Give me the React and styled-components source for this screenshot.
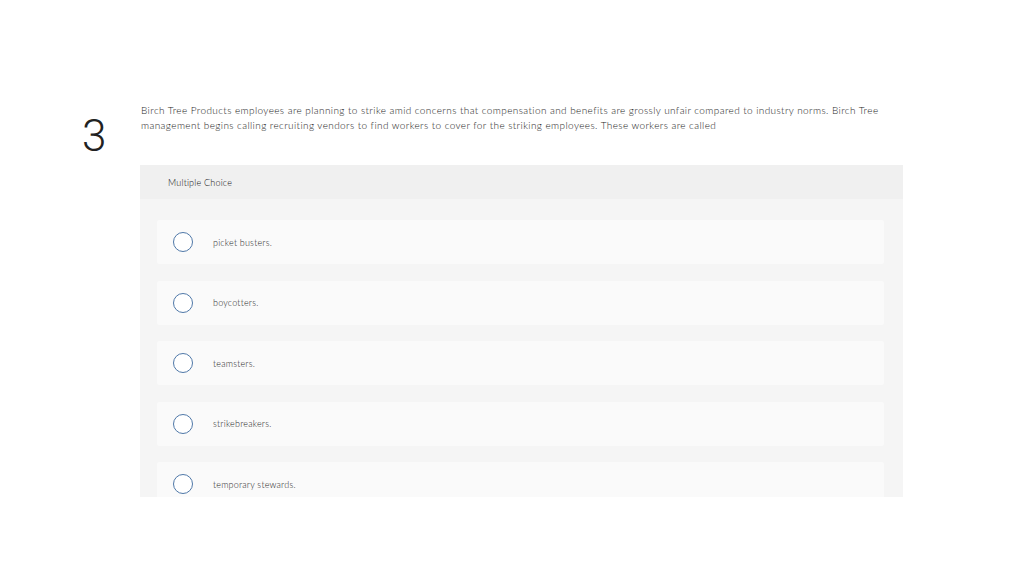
import React from "react";
import styled, { createGlobalStyle } from "styled-components";

const Global = createGlobalStyle`
  html, body { margin: 0; padding: 0; background: #ffffff; }
  body { font-family: Lato, "Open Sans", "Liberation Sans", sans-serif; }
`;

const Page = styled.main`
  padding-top: 103px;
`;

const QuestionRow = styled.section`
  display: flex;
  align-items: flex-start;
`;

const NumberCol = styled.div`
  width: 140px;
  box-sizing: border-box;
  padding-left: 82px;
  flex: none;
`;

const Number = styled.div`
  font-family: Roboto, "Open Sans", sans-serif;
  font-weight: 300;
  font-size: 44px;
  line-height: 1;
  color: #222222;
  margin-top: 11px;
`;

const Content = styled.div`
  width: 763px;
  flex: none;
`;

const Prompt = styled.p`
  margin: 0 0 32px 1px;
  width: 745px;
  font-size: 10px;
  line-height: 15px;
  letter-spacing: 0.4px;
  font-weight: 300;
  color: #1e1e1e;
`;

const Panel = styled.div`
  height: 332px;
  overflow: hidden;
  background: #f5f5f5;
`;

const PanelHeader = styled.div`
  height: 34px;
  display: flex;
  align-items: center;
  padding-left: 28px;
  background: #f0f0f0;
  font-size: 9px;
  font-weight: 300;
  letter-spacing: 0.2px;
  color: #111111;
`;

const Options = styled.ul`
  list-style: none;
  margin: 0;
  padding: 21px 19px 0 17px;
  display: flex;
  flex-direction: column;
  gap: 16.5px;
`;

const Option = styled.li`
  height: 44px;
  flex: none;
  display: flex;
  align-items: center;
  gap: 20px;
  padding-left: 16px;
  background: #fafafa;
  border-radius: 2px;
`;

const Radio = styled.span`
  width: 18px;
  height: 18px;
  flex: none;
  border-radius: 50%;
  border: 1px solid #4f78a8;
  background: #ffffff;
`;

const OptionText = styled.span`
  font-size: 9px;
  letter-spacing: 0.2px;
  font-weight: 300;
  color: #2a2a2a;
`;

const options = [
  "picket busters.",
  "boycotters.",
  "teamsters.",
  "strikebreakers.",
  "temporary stewards.",
];

export default function App() {
  return (
    <Page>
      <Global />
      <QuestionRow>
        <NumberCol>
          <Number>3</Number>
        </NumberCol>
        <Content>
          <Prompt>
            Birch Tree Products employees are planning to strike amid concerns that compensation and benefits are grossly unfair compared to industry norms. Birch Tree management begins calling recruiting vendors to find workers to cover for the striking employees. These workers are called
          </Prompt>
          <Panel>
            <PanelHeader>Multiple Choice</PanelHeader>
            <Options>
              {options.map((o) => (
                <Option key={o}>
                  <Radio />
                  <OptionText>{o}</OptionText>
                </Option>
              ))}
            </Options>
          </Panel>
        </Content>
      </QuestionRow>
    </Page>
  );
}
